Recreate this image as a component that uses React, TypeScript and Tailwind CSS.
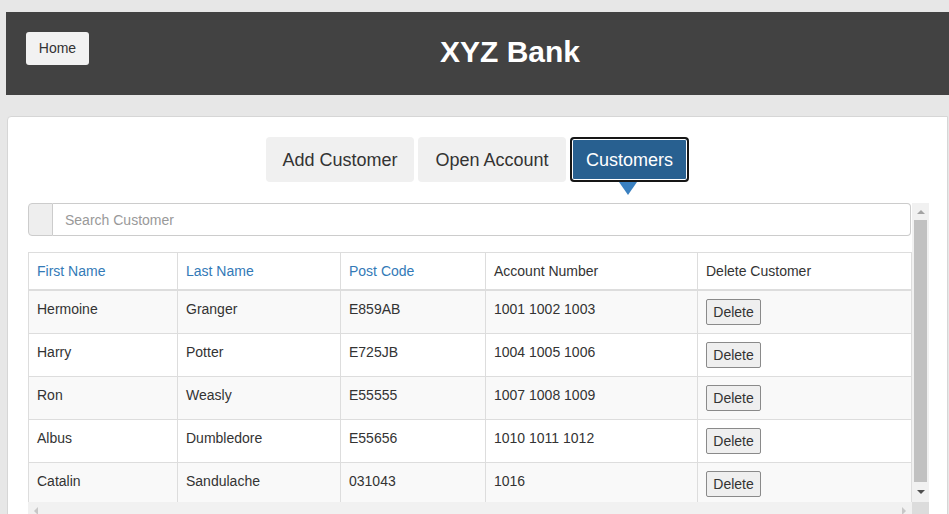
const customers = [
  { first: 'Hermoine', last: 'Granger', post: 'E859AB', account: '1001 1002 1003' },
  { first: 'Harry', last: 'Potter', post: 'E725JB', account: '1004 1005 1006' },
  { first: 'Ron', last: 'Weasly', post: 'E55555', account: '1007 1008 1009' },
  { first: 'Albus', last: 'Dumbledore', post: 'E55656', account: '1010 1011 1012' },
  { first: 'Catalin', last: 'Sandulache', post: '031043', account: '1016' },
];

const App = () => {
  return (
    <div className="h-[514px] w-[949px] overflow-hidden bg-[#e7e7e7] pt-[12px] font-['Liberation_Sans',Arial,sans-serif] text-[14px] text-[#333]">
      {/* Header */}
      <div className="ml-[6px] flex h-[83px] w-[1010px] items-start bg-[#424242] pl-[20px] pt-[20px]">
        <button className="h-[33px] w-[63px] rounded-[3px] bg-[#f2f2f2] text-[14px] text-[#333]">
          Home
        </button>
        <h1 className="ml-[351px] mt-[5px] text-[30px] font-bold leading-none text-white">XYZ Bank</h1>
      </div>

      {/* Main card */}
      <div className="ml-[7px] mt-[21px] w-[941px] rounded-tl-[4px] border border-[#d6d6d6] bg-white px-[20px] pt-[20px]">
        {/* Tabs */}
        <div className="flex justify-center gap-[4px]">
          <button className="h-[45px] w-[148px] rounded-[4px] bg-[#f0f0f0] pt-[1px] text-[18px] text-[#333]">
            Add Customer
          </button>
          <button className="h-[45px] w-[148px] rounded-[4px] bg-[#f0f0f0] pt-[1px] text-[18px] text-[#333]">
            Open Account
          </button>
          <div className="relative">
            <button className="h-[45px] w-[119px] rounded-[4px] border-2 border-[#161616] bg-[#286090] pt-[1px] text-[18px] text-white shadow-[inset_0_0_0_1px_#ffffff]">
              Customers
            </button>
            <div className="absolute left-[49px] top-[45px] h-0 w-0 border-x-[9px] border-t-[13px] border-x-transparent border-t-[#3a80c0]" />
          </div>
        </div>

        {/* Scroll area */}
        <div className="mt-[21px] w-[901px]">
          <div className="flex h-[299px]">
            <div className="w-[884px] overflow-hidden">
              {/* Search */}
              <div className="flex h-[33px] w-[883px]">
                <div className="w-[25px] rounded-l-[4px] border border-[#ccc] bg-[#eee]" />
                <input
                  placeholder="Search Customer"
                  className="flex-1 rounded-r-[4px] border border-l-0 border-[#ccc] px-[12px] pt-[1px] text-[14px] text-[#555] outline-none placeholder:text-[#999]"
                />
              </div>

              {/* Table */}
              <table className="mt-[16px] w-[883px] table-fixed border-collapse border border-[#ddd]">
                <colgroup>
                  <col className="w-[149px]" />
                  <col className="w-[163px]" />
                  <col className="w-[145px]" />
                  <col className="w-[212px]" />
                  <col className="w-[214px]" />
                </colgroup>
                <thead>
                  <tr className="border-b-2 border-[#ddd]">
                    <th className="border border-b-2 border-[#ddd] p-[8px] text-left font-normal leading-[20px] text-[#337ab7]">First Name</th>
                    <th className="border border-b-2 border-[#ddd] p-[8px] text-left font-normal leading-[20px] text-[#337ab7]">Last Name</th>
                    <th className="border border-b-2 border-[#ddd] p-[8px] text-left font-normal leading-[20px] text-[#337ab7]">Post Code</th>
                    <th className="border border-b-2 border-[#ddd] p-[8px] text-left font-normal leading-[20px]">Account Number</th>
                    <th className="border border-b-2 border-[#ddd] p-[8px] text-left font-normal leading-[20px]">Delete Customer</th>
                  </tr>
                </thead>
                <tbody>
                  {customers.map((c, i) => (
                    <tr key={c.first} className={i % 2 === 0 ? 'bg-[#f9f9f9]' : 'bg-white'}>
                      <td className="border border-[#ddd] p-[8px] align-top leading-[20px]">{c.first}</td>
                      <td className="border border-[#ddd] p-[8px] align-top leading-[20px]">{c.last}</td>
                      <td className="border border-[#ddd] p-[8px] align-top leading-[20px]">{c.post}</td>
                      <td className="border border-[#ddd] p-[8px] align-top leading-[20px]">{c.account}</td>
                      <td className="border border-[#ddd] p-[8px] align-top leading-[20px]">
                        <button className="h-[26px] w-[55px] rounded-[2px] border border-[#8a8a8a] bg-[#efefef] text-[14px] text-[#333]">
                          Delete
                        </button>
                      </td>
                    </tr>
                  ))}
                </tbody>
              </table>
            </div>

            {/* Vertical scrollbar */}
            <div className="flex w-[17px] flex-col bg-[#f1f1f1]">
              <div className="flex h-[17px] items-center justify-center">
                <div className="h-0 w-0 border-x-[4px] border-b-[4px] border-x-transparent border-b-[#a3a3a3]" />
              </div>
              <div className="mx-[2px] flex-1 bg-[#c1c1c1]" />
              <div className="flex h-[20px] items-center justify-center">
                <div className="h-0 w-0 border-x-[4px] border-t-[4px] border-x-transparent border-t-[#505050]" />
              </div>
            </div>
          </div>

          {/* Horizontal scrollbar */}
          <div className="flex h-[17px]">
            <div className="flex w-[884px] items-center justify-between bg-[#f1f1f1] px-[6px]">
              <div className="h-0 w-0 border-y-[4px] border-r-[4px] border-y-transparent border-r-[#c8c8c8]" />
              <div className="h-0 w-0 border-y-[4px] border-l-[4px] border-y-transparent border-l-[#c8c8c8]" />
            </div>
            <div className="w-[17px] bg-[#dcdcdc]" />
          </div>
        </div>
      </div>
    </div>
  );
};

export default App;
